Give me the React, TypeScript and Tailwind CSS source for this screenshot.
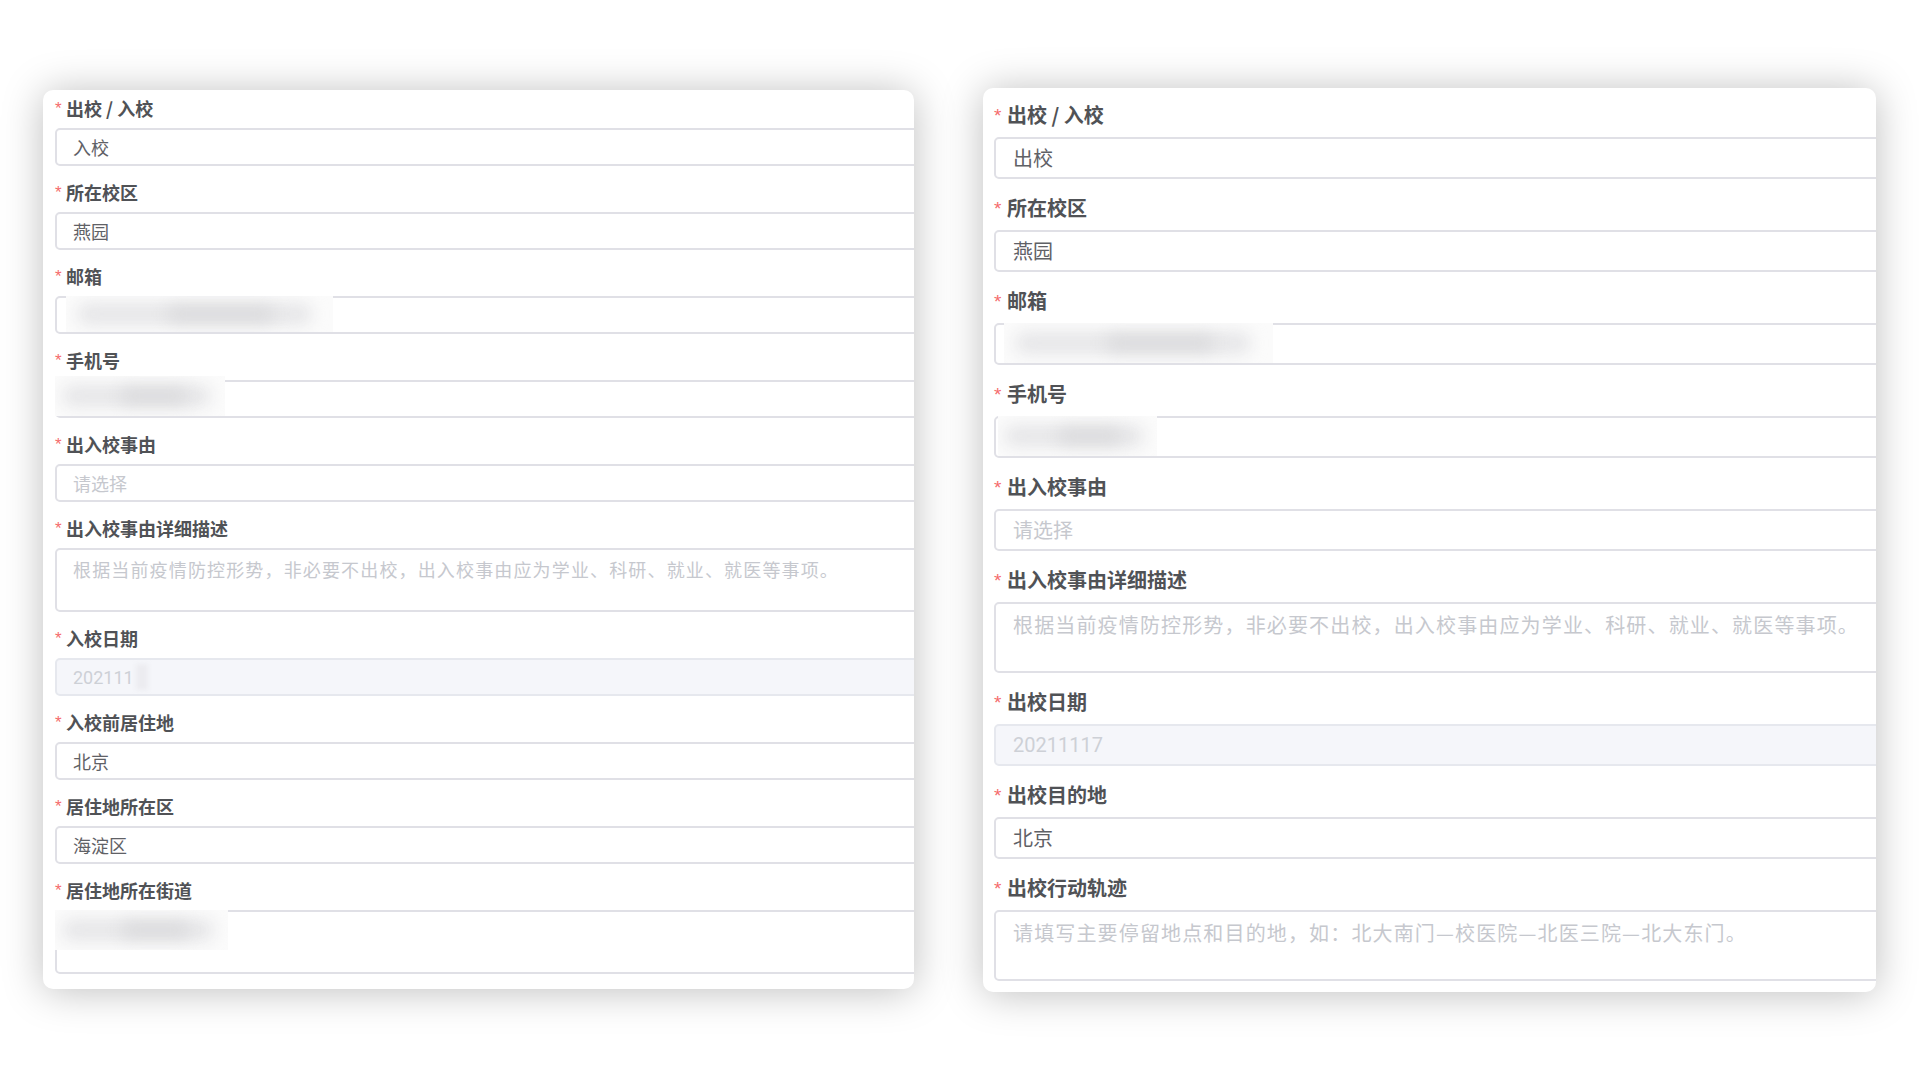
import type { ReactNode } from 'react'

type Size = 'sm' | 'lg'

const sizes = {
  sm: {
    card: 'w-[871px] mt-[2px] pt-[6px] pb-[15px] pl-[12px] gap-[14px]',
    label: 'text-[18px] leading-[24px] mb-2',
    star: 'text-[17px] w-[11px] mt-[4px]',
    input: 'h-[38px] text-[18px] pl-[16px]',
    area: 'h-[64px] pt-[7px] pl-[16px] text-[18px] tracking-[1.15px]',
  },
  lg: {
    card: 'w-[893px] pt-[13px] pb-[11px] pl-[11px] gap-[15px]',
    label: 'text-[20px] leading-[28px] mb-2',
    star: 'text-[19px] w-[13px] mt-[5px]',
    input: 'h-[42px] text-[20px] pl-[17px]',
    area: 'h-[71px] pt-[9px] pl-[17px] text-[20px] tracking-[1.15px]',
  },
}

const font = 'font-["Noto_Sans_CJK_SC","Noto_Sans",sans-serif]'

function Blur({ className }: { className: string }) {
  return (
    <div className={`absolute overflow-hidden bg-[#fbfbfb] ${className}`}>
      <div className="absolute left-[4%] right-[8%] top-1/2 h-[22px] -translate-y-1/2 rounded-full bg-[#e6e6e8] blur-[8px]" />
      <div className="absolute left-[38%] right-[22%] top-1/2 h-[14px] -translate-y-1/2 rounded-full bg-[#d9d9db] blur-[8px]" />
    </div>
  )
}

function Field({ size, label, children }: { size: Size; label: string; children: ReactNode }) {
  const s = sizes[size]
  return (
    <div className="flex flex-col">
      <div className={`flex items-start font-bold text-[#505256] ${s.label}`}>
        <span className={`font-["Liberation_Sans",sans-serif] font-normal leading-none text-[#f56c6c] ${s.star}`}>*</span>
        <span>{label}</span>
      </div>
      {children}
    </div>
  )
}

function Input({
  size,
  value,
  placeholder,
  disabled,
  blur,
  extra,
}: {
  size: Size
  value?: string
  placeholder?: string
  disabled?: boolean
  blur?: string
  extra?: ReactNode
}) {
  const s = sizes[size]
  return (
    <div
      className={`relative flex w-[calc(100%+40px)] items-center rounded-[5px] border-2 ${s.input} ${
        disabled ? 'border-[#e6e8ee] bg-[#f5f6fa]' : 'border-[#e0e0e6] bg-white'
      }`}
    >
      {value && (
        <span className={disabled ? 'font-["Roboto",sans-serif] text-[#cdd0d6]' : 'text-[#5f6166]'}>{value}</span>
      )}
      {placeholder && <span className="text-[#c6c8ce]">{placeholder}</span>}
      {extra}
      {blur && <Blur className={blur} />}
    </div>
  )
}

function Area({ size, placeholder, blur }: { size: Size; placeholder?: string; blur?: string }) {
  const s = sizes[size]
  return (
    <div
      className={`relative w-[calc(100%+40px)] rounded-[5px] border-2 border-[#e0e0e6] bg-white leading-[24px] ${s.area}`}
    >
      {placeholder && <span className="whitespace-nowrap text-[#c6c8ce]">{placeholder}</span>}
      {blur && <Blur className={blur} />}
    </div>
  )
}

function EntryCard() {
  const size: Size = 'sm'
  return (
    <div
      className={`flex flex-col overflow-hidden rounded-[10px] bg-white shadow-[0_2px_40px_rgba(0,0,0,0.26)] ${sizes[size].card}`}
    >
      <Field size={size} label="出校 / 入校">
        <Input size={size} value="入校" />
      </Field>
      <Field size={size} label="所在校区">
        <Input size={size} value="燕园" />
      </Field>
      <Field size={size} label="邮箱">
        <Input size={size} blur="left-[9px] top-[-2px] w-[267px] h-[36px]" />
      </Field>
      <Field size={size} label="手机号">
        <Input size={size} blur="left-[-2px] top-[-6px] w-[170px] h-[40px]" />
      </Field>
      <Field size={size} label="出入校事由">
        <Input size={size} placeholder="请选择" />
      </Field>
      <Field size={size} label="出入校事由详细描述">
        <Area size={size} placeholder="根据当前疫情防控形势，非必要不出校，出入校事由应为学业、科研、就业、就医等事项。" />
      </Field>
      <Field size={size} label="入校日期">
        <Input
          size={size}
          value="202111"
          disabled
          extra={<span className="ml-[2px] h-[26px] w-[12px] bg-[#ececf0] blur-[2px]" />}
        />
      </Field>
      <Field size={size} label="入校前居住地">
        <Input size={size} value="北京" />
      </Field>
      <Field size={size} label="居住地所在区">
        <Input size={size} value="海淀区" />
      </Field>
      <Field size={size} label="居住地所在街道">
        <Area size={size} blur="left-[-2px] top-[-2px] w-[173px] h-[40px]" />
      </Field>
    </div>
  )
}

function ExitCard() {
  const size: Size = 'lg'
  return (
    <div
      className={`flex flex-col overflow-hidden rounded-[10px] bg-white shadow-[0_2px_40px_rgba(0,0,0,0.26)] ${sizes[size].card}`}
    >
      <Field size={size} label="出校 / 入校">
        <Input size={size} value="出校" />
      </Field>
      <Field size={size} label="所在校区">
        <Input size={size} value="燕园" />
      </Field>
      <Field size={size} label="邮箱">
        <Input size={size} blur="left-[8px] top-[-2px] w-[269px] h-[40px]" />
      </Field>
      <Field size={size} label="手机号">
        <Input size={size} blur="left-[2px] top-[-2px] w-[159px] h-[40px]" />
      </Field>
      <Field size={size} label="出入校事由">
        <Input size={size} placeholder="请选择" />
      </Field>
      <Field size={size} label="出入校事由详细描述">
        <Area size={size} placeholder="根据当前疫情防控形势，非必要不出校，出入校事由应为学业、科研、就业、就医等事项。" />
      </Field>
      <Field size={size} label="出校日期">
        <Input size={size} value="20211117" disabled />
      </Field>
      <Field size={size} label="出校目的地">
        <Input size={size} value="北京" />
      </Field>
      <Field size={size} label="出校行动轨迹">
        <Area size={size} placeholder="请填写主要停留地点和目的地，如：北大南门—校医院—北医三院—北大东门。" />
      </Field>
    </div>
  )
}

export default function App() {
  return (
    <div className={`flex h-[1080px] w-[1920px] items-start gap-[69px] overflow-hidden bg-white pl-[43px] pt-[88px] ${font}`}>
      <EntryCard />
      <ExitCard />
    </div>
  )
}
